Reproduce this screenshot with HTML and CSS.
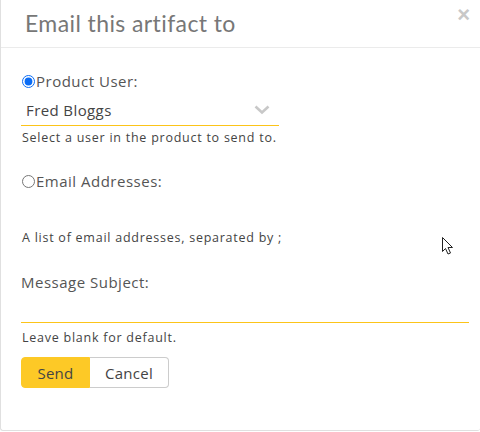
FILE: index.html
```html
<!DOCTYPE html>
<html>
<head>
<meta charset="utf-8">
<link rel="stylesheet" href="styles.css">
</head>
<body>
<div class="modal">
  <div class="modal-header">
    <h2 class="modal-title">Email this artifact to</h2>
    <span class="close">&times;</span>
  </div>
  <div class="modal-body">
    <label class="radio-label"><input type="radio" name="to" checked class="radio">Product User:</label>
    <div class="select">
      <span>Fred Bloggs</span>
      <svg class="chev" width="16" height="10" viewBox="0 0 16 10"><path d="M1.5 1.5 L8 7.5 L14.5 1.5" fill="none" stroke="#c8c8c8" stroke-width="2.6"/></svg>
    </div>
    <p class="help">Select a user in the product to send to.</p>
    <label class="radio-label second"><input type="radio" name="to" class="radio">Email Addresses:</label>
    <p class="help list">A list of email addresses, separated by ;</p>
    <div class="field-label">Message Subject:</div>
    <div class="text-input"></div>
    <p class="help blank">Leave blank for default.</p>
    <div class="btn-group">
      <button class="btn btn-primary">Send</button>
      <button class="btn btn-default">Cancel</button>
    </div>
  </div>
  <svg class="cursor" width="14" height="20" viewBox="0 0 14 20"><path d="M1.5 1.5 L1.5 15.5 L4.5 12.5 L7 18 L9.5 17 L7 11.5 L11.5 11.5 Z" fill="#fff" stroke="#222" stroke-width="1"/></svg>
</div>
</body>
</html>
```
FILE: styles.css
```css
html, body { margin: 0; padding: 0; background: #fff; }
body { width: 480px; height: 432px; overflow: hidden; font-family: "Open Sans", sans-serif; }
.modal {
  position: relative;
  box-sizing: border-box;
  width: 480px;
  height: 431px;
  border: 1px solid #e0e0e0;
  border-top: none;
  border-right: none;
  border-radius: 0 0 3px 3px;
}
.modal-header {
  height: 48px;
  border-bottom: 1px solid #ebebeb;
  display: flex;
  align-items: flex-start;
  justify-content: space-between;
  box-sizing: border-box;
}
.modal-title {
  margin: 9px 0 0 24px;
  font-family: "Lato", sans-serif;
  font-weight: 400;
  font-size: 23px;
  letter-spacing: 0.4px;
  color: #777;
}
.close {
  margin: 2px 10px 0 0;
  font-size: 22px;
  color: #c8c8c8;
  font-weight: 700;
  font-family: "Liberation Sans", sans-serif;
}
.modal-body { padding: 23px 11px 0 20px; }
.radio-label {
  display: flex;
  align-items: center;
  font-size: 15px;
  letter-spacing: 0.5px;
  color: #555;
  height: 20px;
}
.radio { margin: 0 1px 0 1px; width: 13px; height: 13px; accent-color: #0a6cf5; }
.select {
  margin-top: 7px;
  width: 258px;
  height: 28px;
  border-bottom: 1px solid #fcc419;
  display: flex;
  align-items: flex-start;
  justify-content: space-between;
  padding: 2px 0 0 5px;
  box-sizing: border-box;
  font-size: 15px;
  letter-spacing: 0.4px;
  color: #444;
}
.chev { margin: 5px 9px 0 0; }
.help { margin: 3px 0 0 1px; font-size: 12.5px; letter-spacing: 0.75px; color: #444; line-height: 18px; }
.second { margin-top: 24px; }
.list { margin-top: 38px; }
.blank { margin-top: 6px; }
.field-label { margin-top: 25px; font-size: 15px; letter-spacing: 0.5px; color: #555; line-height: 20px; }
.text-input {
  height: 30px;
  width: 448px;
  border-bottom: 1px solid #fcc419;
}
.btn-group { display: flex; margin-top: 10px; }
.btn {
  font-family: "Open Sans", sans-serif;
  font-size: 15px;
  letter-spacing: 0.3px;
  height: 31px;
  border: 1px solid #ccc;
  background: #fff;
  color: #444;
  padding: 0;
}
.btn-primary {
  width: 69px;
  background: #fdc926;
  border-color: #fdc926;
  border-radius: 4px 0 0 4px;
}
.btn-default {
  width: 79px;
  border-left: none;
  border-radius: 0 4px 4px 0;
}
.cursor { position: absolute; left: 440px; top: 236px; }
```
